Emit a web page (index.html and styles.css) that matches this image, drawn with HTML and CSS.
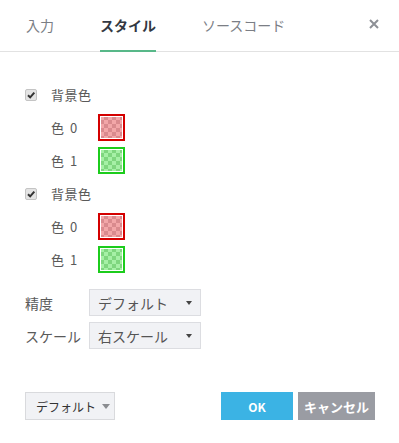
FILE: index.html
```html
<!DOCTYPE html>
<html lang="ja">
<head>
<meta charset="utf-8">
<link rel="stylesheet" href="styles.css">
</head>
<body>
<div class="dialog">
  <div class="tabs">
    <div class="tab">入力</div>
    <div class="tab active">スタイル</div>
    <div class="tab">ソースコード</div>
    <div class="close">
      <svg width="10" height="10" viewBox="0 0 10 10"><path d="M1 1L9 9M9 1L1 9" stroke="#8d9096" stroke-width="2"/></svg>
    </div>
  </div>
  <div class="content">
    <div class="row">
      <span class="check"><svg width="10" height="10" viewBox="0 0 10 10"><path d="M2 5.2L4.2 7.4L8.3 2.6" fill="none" stroke="#333" stroke-width="2"/></svg></span>
      <span class="label">背景色</span>
    </div>
    <div class="row sub">
      <span class="clabel">色 0</span>
      <span class="swatch red"></span>
    </div>
    <div class="row sub">
      <span class="clabel">色 1</span>
      <span class="swatch green"></span>
    </div>
    <div class="row">
      <span class="check"><svg width="10" height="10" viewBox="0 0 10 10"><path d="M2 5.2L4.2 7.4L8.3 2.6" fill="none" stroke="#333" stroke-width="2"/></svg></span>
      <span class="label">背景色</span>
    </div>
    <div class="row sub">
      <span class="clabel">色 0</span>
      <span class="swatch red"></span>
    </div>
    <div class="row sub">
      <span class="clabel">色 1</span>
      <span class="swatch green"></span>
    </div>
    <div class="selects">
      <div class="row">
        <span class="slabel">精度</span>
        <div class="select"><span>デフォルト</span><i class="arrow"></i></div>
      </div>
      <div class="row">
        <span class="slabel">スケール</span>
        <div class="select"><span>右スケール</span><i class="arrow"></i></div>
      </div>
    </div>
  </div>
  <div class="footer">
    <div class="defbtn"><span>デフォルト</span><i class="arrow big"></i></div>
    <div class="btns">
      <div class="btn ok">OK</div>
      <div class="btn cancel">キャンセル</div>
    </div>
  </div>
</div>
</body>
</html>
```

FILE: styles.css
```css
* { box-sizing: border-box; }
html, body { margin: 0; padding: 0; background: #fff; }
body {
  font-family: "Noto Sans CJK JP", "Noto Sans", sans-serif;
  color: #555;
  width: 399px;
  height: 443px;
  overflow: hidden;
}
.tabs {
  display: flex;
  align-items: stretch;
  height: 52px;
  border-bottom: 1px solid #e2e2e2;
  padding-left: 26px;
  gap: 46px;
  position: relative;
}
.tab {
  font-size: 14px;
  line-height: 50px;
  color: #7b7e85;
}
.tab.active {
  color: #333842;
  font-weight: bold;
  border-bottom: 2px solid #58b889;
  margin-bottom: -1px;
}
.close {
  position: absolute;
  right: 20px;
  top: 19px;
  width: 10px;
  height: 10px;
  display: flex;
}
.content {
  padding: 26px 0 0 25px;
}
.row {
  display: flex;
  align-items: center;
  height: 33px;
}
.check {
  width: 12px;
  height: 12px;
  border: 1px solid #c4c4c4;
  background: #e4e4e4;
  border-radius: 2px;
  display: flex;
  align-items: center;
  justify-content: center;
  margin-right: 14px;
}
.label, .clabel, .slabel {
  font-size: 13px;
  color: #5a5a5a;
}
.label { letter-spacing: 0.5px; }
.row.sub { padding-left: 26px; }
.clabel { width: 47px; word-spacing: 3px; }
.swatch {
  width: 27px;
  height: 27px;
  border: 2px solid;
  padding: 1px;
  background-clip: content-box;
  background-size: 8px 8px;
}
.swatch.red {
  border-color: #d40000;
  background-image: conic-gradient(#d98a8e 0 25%, #f2a6a8 0 50%, #d98a8e 0 75%, #f2a6a8 0);
}
.swatch.green {
  border-color: #1ccc1c;
  background-image: conic-gradient(#7fd67f 0 25%, #a6f0a6 0 50%, #7fd67f 0 75%, #a6f0a6 0);
}
.selects { margin-top: 10px; }
.slabel { width: 64px; font-size: 14px; }
.select {
  width: 112px;
  height: 27px;
  background: #f1f2f5;
  border: 1px solid #dcdde1;
  display: flex;
  align-items: center;
  justify-content: space-between;
  padding: 0 8px 0 8px;
  font-size: 14px;
  color: #555;
}
.arrow {
  width: 0;
  height: 0;
  border-left: 3px solid transparent;
  border-right: 3px solid transparent;
  border-top: 4px solid #444;
}
.arrow.big {
  border-left-width: 4px;
  border-right-width: 4px;
  border-top: 5px solid #8a8c90;
}
.footer {
  display: flex;
  justify-content: space-between;
  padding: 40px 24px 0 25px;
}
.defbtn {
  width: 90px;
  height: 28px;
  background: #f1f2f5;
  border: 1px solid #d9dadd;
  display: flex;
  align-items: center;
  gap: 6px;
  padding-left: 10px;
  font-size: 12px;
  color: #333;
}
.btns { display: flex; gap: 5px; }
.btn {
  height: 28px;
  display: flex;
  align-items: center;
  justify-content: center;
  color: #fff;
  font-weight: bold;
  font-size: 12px;
}
.btn.ok { width: 72px; background: #3bb3e4; }
.btn.cancel { width: 77px; background: #9a9ca3; font-size: 13px; }
```
